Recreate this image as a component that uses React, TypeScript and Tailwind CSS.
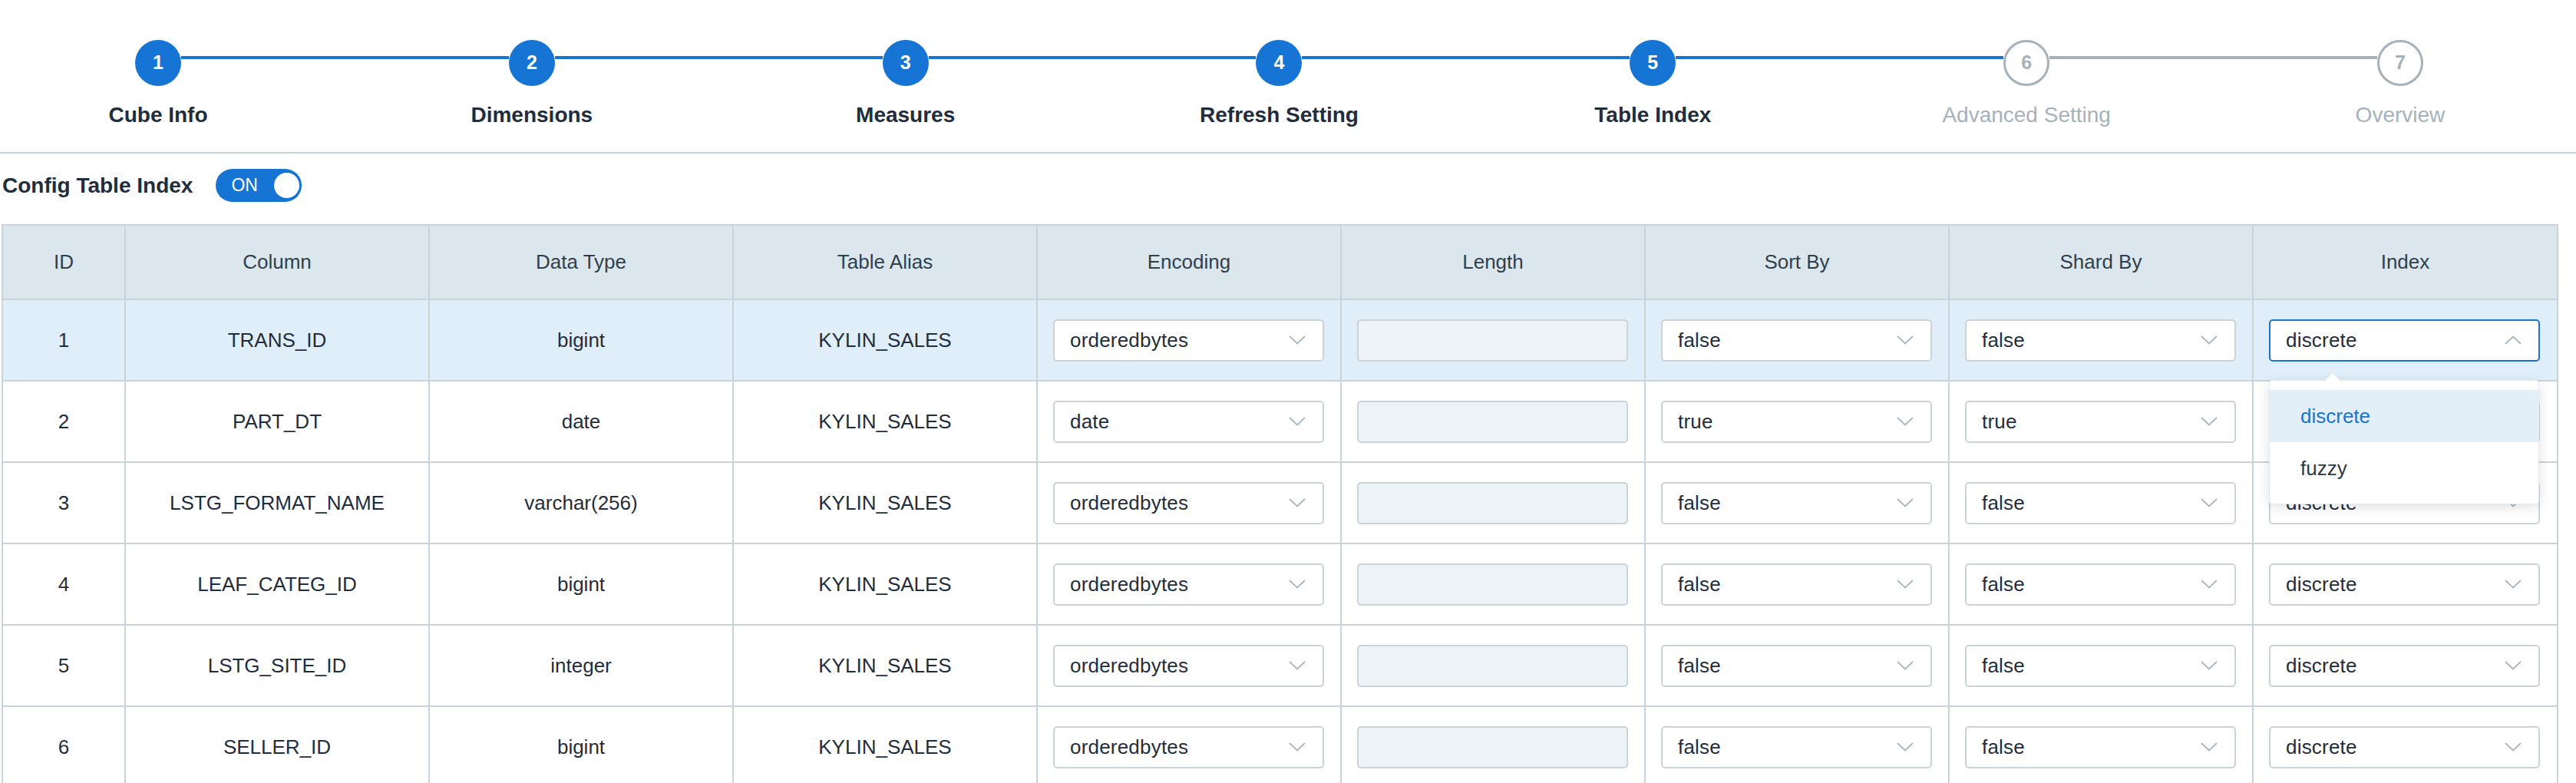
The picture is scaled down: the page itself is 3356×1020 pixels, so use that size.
import React from "react";

type Step = { n: number; label: string; done: boolean };
const steps: Step[] = [
  { n: 1, label: "Cube Info", done: true },
  { n: 2, label: "Dimensions", done: true },
  { n: 3, label: "Measures", done: true },
  { n: 4, label: "Refresh Setting", done: true },
  { n: 5, label: "Table Index", done: true },
  { n: 6, label: "Advanced Setting", done: false },
  { n: 7, label: "Overview", done: false },
];

type Row = {
  id: number;
  column: string;
  type: string;
  alias: string;
  encoding: string;
  sortBy: string;
  shardBy: string;
  index: string;
};

const rows: Row[] = [
  { id: 1, column: "TRANS_ID", type: "bigint", alias: "KYLIN_SALES", encoding: "orderedbytes", sortBy: "false", shardBy: "false", index: "discrete" },
  { id: 2, column: "PART_DT", type: "date", alias: "KYLIN_SALES", encoding: "date", sortBy: "true", shardBy: "true", index: "discrete" },
  { id: 3, column: "LSTG_FORMAT_NAME", type: "varchar(256)", alias: "KYLIN_SALES", encoding: "orderedbytes", sortBy: "false", shardBy: "false", index: "discrete" },
  { id: 4, column: "LEAF_CATEG_ID", type: "bigint", alias: "KYLIN_SALES", encoding: "orderedbytes", sortBy: "false", shardBy: "false", index: "discrete" },
  { id: 5, column: "LSTG_SITE_ID", type: "integer", alias: "KYLIN_SALES", encoding: "orderedbytes", sortBy: "false", shardBy: "false", index: "discrete" },
  { id: 6, column: "SELLER_ID", type: "bigint", alias: "KYLIN_SALES", encoding: "orderedbytes", sortBy: "false", shardBy: "false", index: "discrete" },
];

function Chevron({ up = false }: { up?: boolean }) {
  return (
    <svg width="22" height="12" viewBox="0 0 22 12" className="shrink-0">
      <polyline
        points={up ? "1,11 11,1.5 21,11" : "1,1 11,10.5 21,1"}
        fill="none"
        stroke="#a9b6bf"
        strokeWidth="1.8"
      />
    </svg>
  );
}

function Select({ value, focused = false }: { value: string; focused?: boolean }) {
  return (
    <div
      className={
        focused
          ? "flex h-[55px] w-[353px] items-center justify-between rounded-[5px] border-2 border-[#1574d4] bg-white pl-[20px] pr-[22px] text-left text-[26px] text-[#1f2d3d]"
          : "flex h-[55px] w-[353px] items-center justify-between rounded-[5px] border-2 border-[#c9d3d8] bg-white pl-[20px] pr-[22px] text-left text-[26px] text-[#1f2d3d]"
      }
    >
      <span className="tracking-[0.2px]">{value}</span>
      <Chevron up={focused} />
    </div>
  );
}

function Dropdown() {
  return (
    <div className="absolute left-[20px] top-[104px] z-10 w-[352px]">
      <svg width="22" height="11" viewBox="0 0 22 11" className="absolute left-[72px] top-[-9px]">
        <polygon points="0,11 11,0 22,11" fill="#ffffff" />
        <polyline points="0,11 11,0 22,11" fill="none" stroke="#e6ebef" strokeWidth="1" />
      </svg>
      <div className="rounded-[4px] border border-[#e4e9ed] bg-white py-[12px] shadow-[0_4px_16px_rgba(0,0,0,0.12)]">
        <div className="flex h-[68px] items-center bg-[#e2eef8] pl-[40px] text-left text-[26px] text-[#1574d4]">discrete</div>
        <div className="flex h-[68px] items-center pl-[40px] text-left text-[26px] text-[#2d3b48]">fuzzy</div>
      </div>
    </div>
  );
}

export default function App() {
  return (
    <div className="w-[3356px] bg-white font-['Liberation_Sans',Arial,sans-serif] text-[#1f2d3d]">
      {/* Steps */}
      <div className="h-[200px] border-b-2 border-[#c9d3d7] pt-[52px]">
        <div className="ml-[176px] flex w-[2981px] items-start">
          {steps.map((s, i) => (
            <React.Fragment key={s.n}>
              <div
                className={
                  s.done
                    ? "flex h-[60px] w-[60px] shrink-0 items-center justify-center rounded-full bg-[#1574d4] text-[25px] font-bold text-white"
                    : "flex h-[60px] w-[60px] shrink-0 items-center justify-center rounded-full border-[3px] border-[#a5b2bc] bg-white text-[25px] font-bold text-[#a5b2bc]"
                }
              >
                {s.n}
              </div>
              {i < steps.length - 1 && (
                <div
                  className={
                    steps[i + 1].done || i === 4
                      ? "mt-[21px] h-[4px] flex-1 bg-[#1574d4]"
                      : "mt-[21px] h-[4px] flex-1 bg-[#a5b2bc]"
                  }
                />
              )}
            </React.Fragment>
          ))}
        </div>
        <div className="ml-[56px] mt-[23px] flex w-[3221px] justify-between">
          {steps.map((s) => (
            <div
              key={s.n}
              className={
                s.done
                  ? "w-[300px] text-center text-[28px] font-bold leading-[30px] text-[#1f2d3d]"
                  : "w-[300px] text-center text-[28px] leading-[30px] text-[#a5b2bc]"
              }
            >
              {s.label}
            </div>
          ))}
        </div>
      </div>

      {/* Config Table Index */}
      <div className="flex h-[83px] items-center gap-[30px] pl-[3px]">
        <span className="text-[28px] font-bold text-[#1f2d3d]">Config Table Index</span>
        <div className="relative flex h-[43px] w-[112px] items-center rounded-full bg-[#1574d4]">
          <span className="pl-[20px] text-[23px] text-white">ON</span>
          <span className="absolute right-[3px] top-[5px] h-[33px] w-[33px] rounded-full bg-white" />
        </div>
      </div>

      {/* Table */}
      <table className="ml-[2px] mt-[9px] w-[3329px] table-fixed border-collapse text-[26px]">
        <colgroup>
          <col className="w-[160px]" />
          <col className="w-[396px]" />
          <col className="w-[396px]" />
          <col className="w-[396px]" />
          <col className="w-[396px]" />
          <col className="w-[396px]" />
          <col className="w-[396px]" />
          <col className="w-[396px]" />
          <col className="w-[397px]" />
        </colgroup>
        <thead>
          <tr className="h-[97px] bg-[#dce6ed]">
            {["ID", "Column", "Data Type", "Table Alias", "Encoding", "Length", "Sort By", "Shard By", "Index"].map((h) => (
              <th key={h} className="border-2 border-[#c9d3d8] text-center font-normal text-[#2f3f4d]">
                {h}
              </th>
            ))}
          </tr>
        </thead>
        <tbody>
          {rows.map((r) => (
            <tr key={r.id} className={r.id === 1 ? "h-[106px] bg-[#dfeef8]" : "h-[106px] bg-white"}>
              <td className="border-2 border-[#c9d3d8] text-center text-[#1f2d3d]">{r.id}</td>
              <td className="border-2 border-[#c9d3d8] text-center text-[#1f2d3d]">{r.column}</td>
              <td className="border-2 border-[#c9d3d8] text-center text-[#1f2d3d]">{r.type}</td>
              <td className="border-2 border-[#c9d3d8] text-center text-[#1f2d3d]">{r.alias}</td>
              <td className="border-2 border-[#c9d3d8] pl-[20px]">
                <Select value={r.encoding} />
              </td>
              <td className="border-2 border-[#c9d3d8] pl-[20px]">
                <div className="h-[55px] w-[353px] rounded-[5px] border-2 border-[#c9d3d8] bg-[#edf3f6]" />
              </td>
              <td className="border-2 border-[#c9d3d8] pl-[20px]">
                <Select value={r.sortBy} />
              </td>
              <td className="border-2 border-[#c9d3d8] pl-[20px]">
                <Select value={r.shardBy} />
              </td>
              <td className="relative border-2 border-[#c9d3d8] pl-[20px]">
                <Select value={r.index} focused={r.id === 1} />
                {r.id === 1 && <Dropdown />}
              </td>
            </tr>
          ))}
        </tbody>
      </table>
    </div>
  );
}
